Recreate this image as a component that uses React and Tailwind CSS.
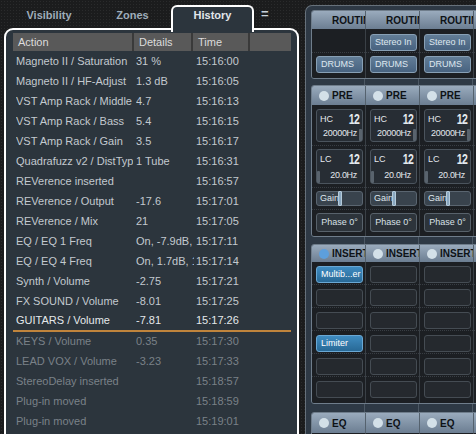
const history = [
  ["Magneto II / Saturation", "31 %", "15:16:00"],
  ["Magneto II / HF-Adjust", "1.3 dB", "15:16:05"],
  ["VST Amp Rack / Middle", "4.7", "15:16:13"],
  ["VST Amp Rack / Bass", "5.4", "15:16:15"],
  ["VST Amp Rack / Gain", "3.5", "15:16:17"],
  ["Quadrafuzz v2 / DistType", "1 Tube", "15:16:31"],
  ["REVerence inserted", "", "15:16:57"],
  ["REVerence / Output", "-17.6", "15:17:01"],
  ["REVerence / Mix", "21", "15:17:05"],
  ["EQ / EQ 1 Freq", "On, -7.9dB, 100Hz", "15:17:11"],
  ["EQ / EQ 4 Freq", "On, 1.7dB, 10000Hz", "15:17:14"],
  ["Synth / Volume", "-2.75", "15:17:21"],
  ["FX SOUND / Volume", "-8.01", "15:17:25"],
];

const undone = [
  ["KEYS / Volume", "0.35", "15:17:30"],
  ["LEAD VOX / Volume", "-3.23", "15:17:33"],
  ["StereoDelay inserted", "", "15:18:57"],
  ["Plug-in moved", "", "15:18:59"],
  ["Plug-in moved", "", "15:19:01"],
];

function Row({ item, color, h = "h-[20px]" }) {
  return (
    <div className={`flex items-center pl-[3px] whitespace-nowrap ${h} ${color}`}>
      <div className="w-[117px] overflow-hidden mr-[3px]">{item[0]}</div>
      <div className="w-[58px] overflow-hidden mr-[2px]">{item[1]}</div>
      <div>{item[2]}</div>
    </div>
  );
}

function HistoryPanel() {
  const th = "h-full flex items-center pl-[5px] border-r-2 border-[#3a3a3a]";
  return (
    <div className="w-[299px] shrink-0 flex flex-col">
      {/* tabs */}
      <div className="flex items-start h-[30px] pl-[4px] text-[11px] font-bold relative z-10">
        <div className="w-[90px] h-[20px] mt-[5px] flex items-center justify-center text-[#9fadba]">Visibility</div>
        <div className="w-[77px] h-[20px] mt-[5px] flex items-center justify-center text-[#9fadba]">Zones</div>
        <div className="w-[83px] h-[27px] mt-[5px] pb-[8px] flex items-center justify-center text-[#e2e6ea] bg-[#2c353d] border-2 border-b-0 border-white rounded-t-[6px]">History</div>
        <div className="h-[20px] mt-[4px] ml-[7px] flex items-center text-[#c9d2da] text-[13px]">=</div>
      </div>

      {/* panel */}
      <div className="ml-[4px] -mt-[2px] flex-1 bg-[#2c353d] border-2 border-b-0 border-white rounded-t-[9px] pt-[3px] pl-[7px] pr-[6px] text-[11px]">
        <div className="flex h-[18px] bg-[#595959] text-[#dcdcdc]">
          <div className={`${th} w-[121px]`}>Action</div>
          <div className={`${th} w-[59px]`}>Details</div>
          <div className={`${th} w-[57px]`}>Time</div>
          <div className="flex-1" />
        </div>
        {history.map((r, i) => (
          <Row key={i} item={r} color="text-[#c3c9cf]" />
        ))}
        <Row item={["GUITARS / Volume", "-7.81", "15:17:26"]} color="text-[#e4e8eb]" h="h-[19px]" />
        <div className="h-[2px] bg-[#c0843c]" />
        {undone.map((r, i) => (
          <Row key={i} item={r} color="text-[#7a8188]" h={i === 0 ? "h-[19px]" : "h-[20px]"} />
        ))}
      </div>
    </div>
  );
}

const cols = [0, 1, 2, 3];

function Header({ label, led, ledColors = [], h = "h-[18px]" }) {
  return (
    <div className="flex">
      {cols.map((c) => (
        <div
          key={c}
          className={`w-[54px] shrink-0 ${h} flex items-center border-r border-[#55626e] bg-gradient-to-b from-[#9aabbd] to-[#6c7e92] overflow-hidden whitespace-nowrap`}
        >
          {led ? (
            <span className={`ml-[7px] mr-[3px] w-[10px] h-[10px] rounded-full shrink-0 ${ledColors[c] || "bg-[#d3e0e8]"}`} />
          ) : (
            <span className="w-[20px] shrink-0" />
          )}
          <span className="font-bold text-[10px] text-[#0e1216]">{label}</span>
        </div>
      ))}
    </div>
  );
}

function Body({ children }) {
  return (
    <div className="flex bg-[#1c1f23]">
      {cols.map((c) => (
        <div key={c} className="w-[54px] shrink-0 border-r border-[#3a4046] flex flex-col">
          {children(c)}
        </div>
      ))}
    </div>
  );
}

function Gap({ h }) {
  return (
    <div className={`flex ${h}`}>
      {cols.map((c) => (
        <div key={c} className="w-[54px] shrink-0 border-r border-[#4c5864]" />
      ))}
    </div>
  );
}

function Section({ children }) {
  return <div className="border border-[#6f7d8b] rounded-[3px] overflow-hidden w-max">{children}</div>;
}

const blueBtn =
  "ml-[4px] w-[47px] h-[17px] rounded-[3px] border border-[#88a0b5] bg-gradient-to-b from-[#627d97] to-[#486380] text-[9px] text-[#dfe7ef] flex items-center pl-[4px] whitespace-nowrap overflow-hidden";
const emptyBtn = "ml-[4px] w-[47px] h-[17px] rounded-[3px] border border-[#454c53] bg-[#25292e]";
const activeBtn =
  "ml-[4px] w-[47px] h-[17px] rounded-[3px] border border-[#6aa8d4] bg-gradient-to-b from-[#3f8cc1] to-[#286996] text-[9px] text-white flex items-center pl-[4px] whitespace-nowrap overflow-hidden";
const rowSep = "border-b border-dotted border-[#383d43]";

function FilterBox({ label, value, left }) {
  return (
    <div className="ml-[4px] w-[47px] h-full rounded-[3px] border border-[#4b545d] bg-[#272d34] relative text-[#e3e8ed]">
      <div className="flex justify-between items-start pl-[3px] pr-[2px] pt-[3px]">
        <span className="text-[9px] leading-[12px]">{label}</span>
        <span className="text-[14px] font-bold leading-[12px] tracking-[-0.5px] scale-x-75 origin-right inline-block">12</span>
      </div>
      <div className="absolute bottom-[3px] right-[5px] text-[9px] leading-[10px] tracking-[-0.3px]">{value}</div>
      <div
        className={`absolute bottom-0 w-[3px] h-[12px] bg-[#59636d] rounded-[1px] ${left ? "left-0" : "right-0"}`}
      />
    </div>
  );
}

function Mixer() {
  return (
    <div className="ml-[6px] mt-[5px] flex-1 border-l border-t border-[#66717b] rounded-tl-[7px] bg-[#2e3945] pt-[4px] pl-[5px] overflow-hidden">
      <Section>
        <Header label="ROUTING" />
        <Body>
          {(c) => (
            <>
              <div className={`h-[24px] pt-[5px] ${rowSep}`}>
                {c > 0 && <div className={blueBtn}>Stereo In</div>}
              </div>
              <div className="h-[25px] pt-[3px]">
                <div className={blueBtn}>DRUMS</div>
              </div>
            </>
          )}
        </Body>
      </Section>
      <Gap h="h-[6px]" />
      <Section>
        <Header label="PRE" led h="h-[19px]" />
        <Body>
          {(c) => (
            <>
              <div className={`h-[41px] pt-[4px] pb-[3px] ${rowSep}`}>
                <FilterBox label="HC" value="20000Hz" />
              </div>
              <div className={`h-[42px] pt-[3px] pb-[3px] ${rowSep}`}>
                <FilterBox label="LC" value="20.0Hz" left />
              </div>
              <div className={`h-[22px] pt-[3px] pb-[3px] ${rowSep}`}>
                <div className="ml-[4px] w-[47px] h-full rounded-[3px] border border-[#5a6570] bg-[#39434d] flex items-center text-[9px] text-[#dfe6ec] pl-[3px] relative">
                  Gain
                  <span className="absolute top-[-1px] bottom-[-1px] left-[21px] w-[4px] bg-[#8aa7bf] border border-[#b4cada] rounded-[1px]" />
                </div>
              </div>
              <div className="h-[26px] pt-[3px] pb-[4px]">
                <div className="ml-[4px] w-[47px] h-full rounded-[3px] border border-[#58626b] bg-[#2d343b] flex items-center justify-center text-[9px] text-[#d9e0e6]">
                  Phase 0°
                </div>
              </div>
            </>
          )}
        </Body>
      </Section>
      <Gap h="h-[7px]" />
      <Section>
        <Header label="INSERTS" led ledColors={["bg-[#5d9fdc]"]} h="h-[17px]" />
        <Body>
          {(c) => (
            <div className="pb-[3px]">
              {[0, 1, 2, 3, 4, 5].map((r) => (
                <div key={r} className={`h-[23px] pt-[4px] ${r < 5 ? rowSep : ""}`}>
                  {c === 0 && r === 0 ? (
                    <div className={activeBtn}>Multib...er</div>
                  ) : c === 0 && r === 3 ? (
                    <div className={activeBtn}>Limiter</div>
                  ) : (
                    <div className={emptyBtn} />
                  )}
                </div>
              ))}
            </div>
          )}
        </Body>
      </Section>
      <Gap h="h-[8px]" />
      <Section>
        <Header label="EQ" led h="h-[20px]" />
        <Body>{() => <div className="h-[20px]" />}</Body>
      </Section>
    </div>
  );
}

export default function App() {
  return (
    <div className="w-[476px] h-[434px] overflow-hidden flex bg-[#1b1c1d] bg-[radial-gradient(#2a2b2c_1px,transparent_1px)] bg-[length:3px_3px] font-['Liberation_Sans',Arial,sans-serif]">
      <HistoryPanel />
      <Mixer />
    </div>
  );
}
